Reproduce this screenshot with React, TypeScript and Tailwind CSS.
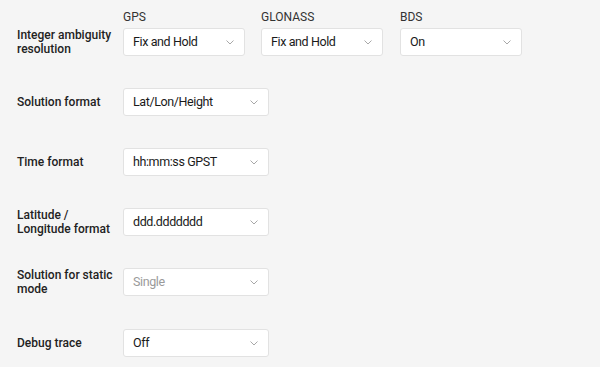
import React from "react";

type Field = {
  label: string;
  value: string;
  disabled?: boolean;
};

const rows: Field[] = [
  { label: "Solution format", value: "Lat/Lon/Height" },
  { label: "Time format", value: "hh:mm:ss GPST" },
  { label: "Latitude / Longitude format", value: "ddd.ddddddd" },
  { label: "Solution for static mode", value: "Single", disabled: true },
  { label: "Debug trace", value: "Off" },
];

function Chevron() {
  return (
    <svg width="8" height="5" viewBox="0 0 8 5" className="shrink-0">
      <polyline points="0.5,0.5 4,4 7.5,0.5" fill="none" stroke="#a8a8a8" strokeWidth="1" />
    </svg>
  );
}

function Select({ value, width, disabled }: { value: string; width: string; disabled?: boolean }) {
  return (
    <div
      className={`${width} h-[28px] flex items-center justify-between pl-[9px] pr-[10px] bg-white border border-[#e2e2e2] rounded-[3px] text-[12.5px] tracking-[-0.4px] ${
        disabled ? "text-[#9a9a9a]" : "text-[#1a1a1a]"
      }`}
    >
      <span>{value}</span>
      <Chevron />
    </div>
  );
}

function Label({ text }: { text: string }) {
  return (
    <div className="w-[106px] shrink-0 pr-[10px] text-[12px] leading-[14px] font-medium text-[#222]">
      {text}
    </div>
  );
}

export default function App() {
  return (
    <div
      className="w-[600px] h-[367px] bg-[#f5f5f5] pl-[17px] pt-[9px] overflow-hidden"
      style={{ fontFamily: "Roboto, 'Liberation Sans', sans-serif" }}
    >
      <div className="flex h-[16px] text-[12px] leading-[16px] text-[#333] pl-[106px]">
        <div className="w-[138px]">GPS</div>
        <div className="w-[139px]">GLONASS</div>
        <div>BDS</div>
      </div>
      <div className="mt-[3px] flex flex-col gap-[32px]">
        <div className="flex items-center h-[28px]">
          <Label text="Integer ambiguity resolution" />
          <div className="flex gap-[16px]">
            <Select value="Fix and Hold" width="w-[122px]" />
            <Select value="Fix and Hold" width="w-[122px]" />
            <div className="ml-[1px]">
              <Select value="On" width="w-[122px]" />
            </div>
          </div>
        </div>
        {rows.map((r, i) => (
          <div
            key={r.label}
            className={`flex items-center h-[28px] ${i === rows.length - 1 ? "mt-[1px]" : ""}`}
          >
            <Label text={r.label} />
            <Select value={r.value} width="w-[146px]" disabled={r.disabled} />
          </div>
        ))}
      </div>
    </div>
  );
}
